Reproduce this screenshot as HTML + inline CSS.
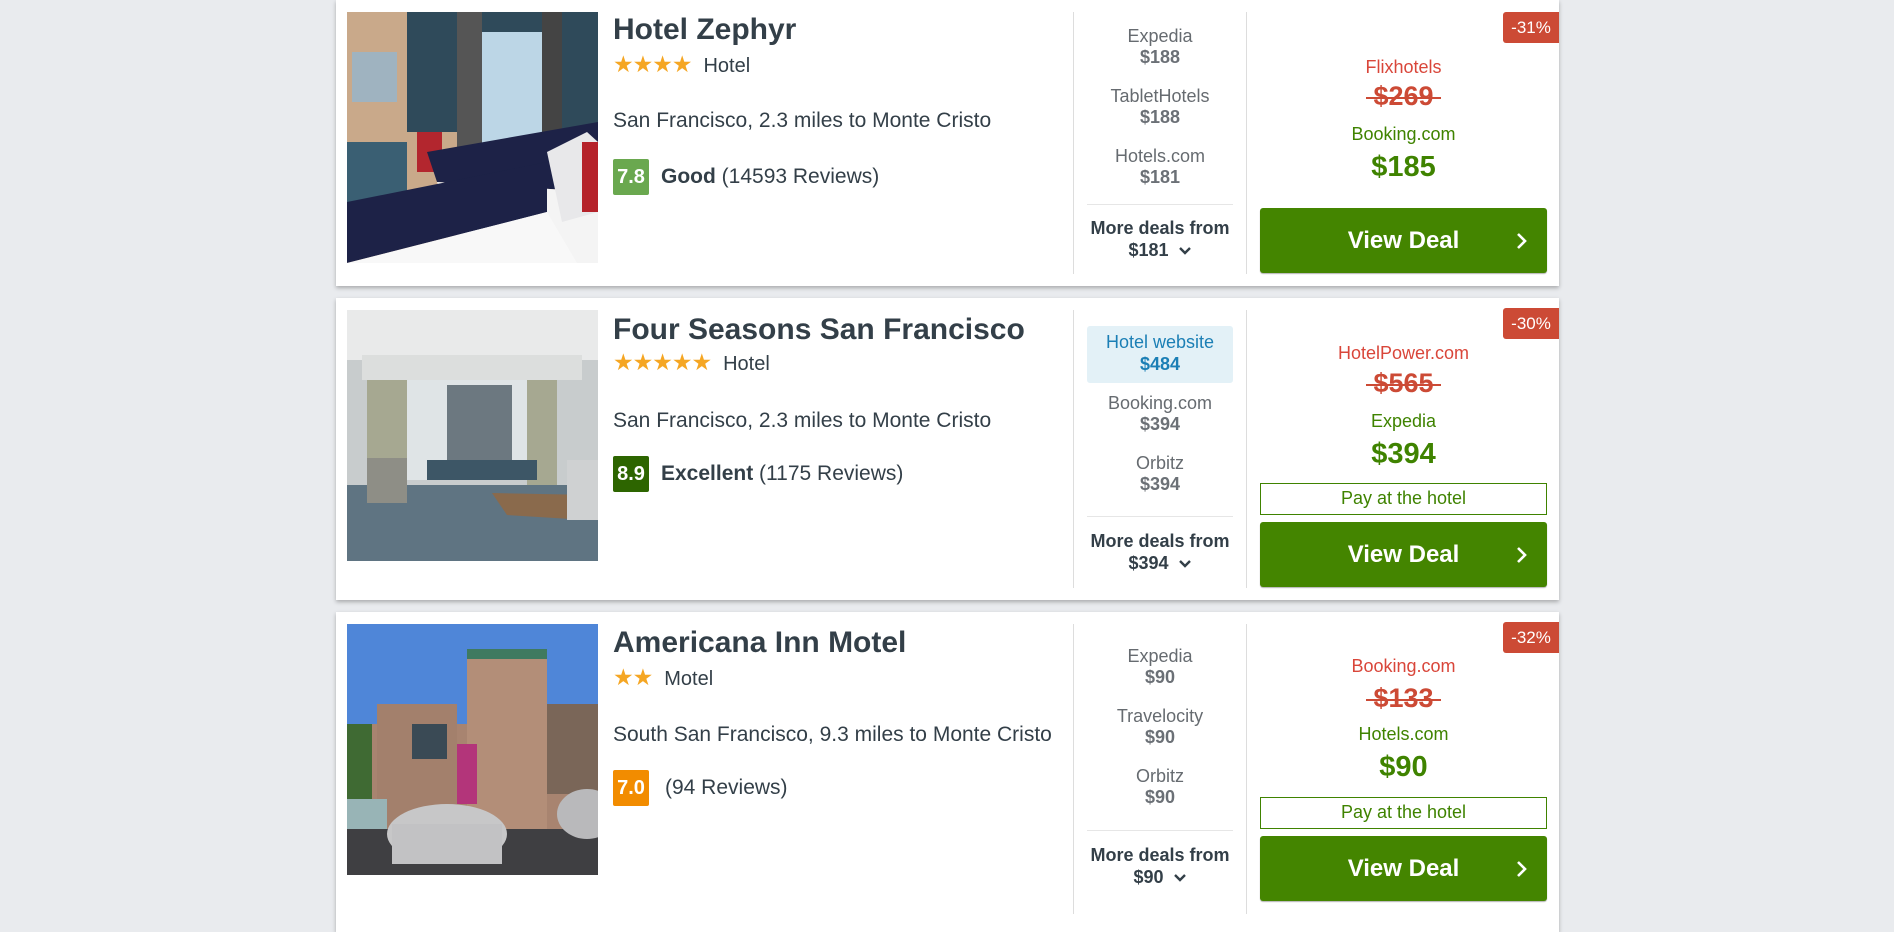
<!DOCTYPE html>
<html><head><meta charset="utf-8"><style>
*{margin:0;padding:0;box-sizing:border-box}
body{width:1894px;height:910px;overflow:hidden;background:#e9ebee;font-family:"Liberation Sans",Arial,sans-serif;position:relative}
.card{position:absolute;left:336px;width:1223px;background:#fff;box-shadow:0 2px 4px rgba(0,0,0,.28)}
.img{position:absolute;left:11px;top:12px;width:251px;height:251px;overflow:hidden}
.t{position:absolute;white-space:nowrap}
.title{left:277px;font-size:30px;font-weight:bold;color:#333f48;height:34px;line-height:34px}
.stars{left:277px;color:#f5a623;font-size:23px;height:26px;line-height:26px;letter-spacing:-1px}
.type{font-size:20px;color:#333f48;letter-spacing:0;margin-left:12px}
.loc{left:277px;font-size:21px;color:#333f48;height:26px;line-height:26px}
.rb{position:absolute;left:277px;width:36px;height:36px;border-radius:2px;color:#fff;font-weight:bold;font-size:20px;line-height:36px;text-align:center}
.rt{left:325px;font-size:21px;color:#333f48;height:36px;line-height:36px}
.v1{position:absolute;left:737px;top:12px;width:1px;background:#ddd}
.v2{position:absolute;left:910px;top:12px;width:1px;background:#ddd}
.mid{position:absolute;left:751px;width:146px;text-align:center;font-size:18px;height:22px;line-height:22px;color:#666b70}
.mid.p{font-weight:bold;color:#6b7076;font-size:18px}
.hl{position:absolute;left:751px;width:146px;background:#e3f1f7;border-radius:3px}
.sep{position:absolute;left:751px;width:146px;height:1px;background:#e6e6e6}
.more{position:absolute;left:736px;width:176px;text-align:center;font-size:18px;font-weight:bold;color:#333f48;height:22px;line-height:22px}
.rc{position:absolute;left:924px;width:287px;text-align:center;white-space:nowrap}
.prov{font-size:18px;height:22px;line-height:22px}
.old{font-size:27px;font-weight:bold;color:#cc4a35;height:30px;line-height:30px}
.old span{position:relative;display:inline-block}
.old span:after{content:"";position:absolute;left:-7px;right:-7px;top:53%;height:2px;background:#cc4a35}
.new{font-size:29px;font-weight:bold;color:#3f8300;height:34px;line-height:34px}
.badge{position:absolute;right:0;top:12px;width:56px;height:31px;background:#cc4a35;color:#fff;font-size:17px;line-height:31px;text-align:center;border-radius:3px 0 0 3px}
.pay{position:absolute;left:924px;width:287px;height:32px;border:1.5px solid #3f8300;color:#3f8300;font-size:18px;line-height:29px;text-align:center}
.btn{position:absolute;left:924px;width:287px;height:65px;background:#448500;border-radius:3px;color:#fff;font-weight:bold;font-size:24px;line-height:65px;text-align:center;box-shadow:0 1px 1px rgba(0,0,0,.3)}
.btn svg{position:absolute;right:19px;top:24px}
.chev{display:inline-block;vertical-align:middle;margin-left:4px}
</style></head><body>

<!-- CARD 1 -->
<div class="card" style="top:0;height:286px">
 <div class="img"><svg width="251" height="251" viewBox="0 0 251 251">
  <rect width="251" height="251" fill="#c9a98a"/>
  <rect x="60" y="0" width="191" height="120" fill="#2f4a5a"/>
  <rect x="130" y="20" width="70" height="140" fill="#bcd6e6"/>
  <rect x="110" y="0" width="25" height="180" fill="#555"/>
  <rect x="195" y="0" width="20" height="170" fill="#444"/>
  <rect x="0" y="130" width="60" height="80" fill="#3a5f73"/>
  <rect x="5" y="40" width="45" height="50" fill="#9fb3c0"/>
  <rect x="70" y="120" width="25" height="40" fill="#b3262e"/>
  <polygon points="80,140 251,110 251,180 90,170" fill="#1d2247"/>
  <polygon points="90,170 251,180 251,251 120,251" fill="#f4f4f4"/>
  <polygon points="0,190 200,150 200,200 0,251" fill="#1d2247"/>
  <polygon points="0,251 200,200 230,251" fill="#f8f8f8"/>
  <polygon points="200,140 240,120 251,130 251,200 215,210" fill="#e8e8ea"/>
  <rect x="235" y="130" width="16" height="70" fill="#b5222a"/>
 </svg></div>
 <div class="t title" style="top:13px">Hotel Zephyr</div>
 <div class="t stars" style="top:51px">★★★★<span class="type">Hotel</span></div>
 <div class="t loc" style="top:108px">San Francisco, 2.3 miles to Monte Cristo</div>
 <div class="rb" style="top:159px;background:#6aa84f">7.8</div>
 <div class="t rt" style="top:159px"><b>Good</b> (14593 Reviews)</div>
 <div class="v1" style="height:262px"></div><div class="v2" style="height:262px"></div>
 <div class="mid" style="top:25px">Expedia</div><div class="mid p" style="top:46px">$188</div>
 <div class="mid" style="top:85px">TabletHotels</div><div class="mid p" style="top:106px">$188</div>
 <div class="mid" style="top:145px">Hotels.com</div><div class="mid p" style="top:166px">$181</div>
 <div class="sep" style="top:204px"></div>
 <div class="more" style="top:217px">More deals from</div>
 <div class="more" style="top:239px">$181 <svg class="chev" width="14" height="10" viewBox="0 0 14 10"><path d="M2 2 L7 7 L12 2" stroke="#333f48" stroke-width="2.4" fill="none"/></svg></div>
 <div class="badge">-31%</div>
 <div class="rc prov" style="top:56px;color:#d9463a">Flixhotels</div>
 <div class="rc old" style="top:81px"><span>$269</span></div>
 <div class="rc prov" style="top:123px;color:#3f8300">Booking.com</div>
 <div class="rc new" style="top:150px">$185</div>
 <div class="btn" style="top:208px">View Deal<svg width="12" height="18" viewBox="0 0 12 18"><path d="M2 2 L9 9 L2 16" stroke="#fff" stroke-width="2.6" fill="none"/></svg></div>
</div>

<!-- CARD 2 -->
<div class="card" style="top:298px;height:302px">
 <div class="img"><svg width="251" height="251" viewBox="0 0 251 251">
  <rect width="251" height="251" fill="#c8cccd"/>
  <rect width="251" height="50" fill="#e9eaea"/>
  <rect x="15" y="45" width="220" height="25" fill="#dcdedd"/>
  <rect x="55" y="70" width="130" height="100" fill="#dfe4e6"/>
  <rect x="100" y="75" width="65" height="80" fill="#6c7880"/>
  <rect x="20" y="70" width="40" height="110" fill="#a6a891"/>
  <rect x="180" y="70" width="30" height="110" fill="#a6a891"/>
  <rect x="80" y="150" width="110" height="20" fill="#3d5666"/>
  <rect x="0" y="175" width="251" height="76" fill="#5f7482"/>
  <polygon points="145,183 245,185 240,210 160,205" fill="#8a6a4c"/>
  <rect x="20" y="148" width="40" height="45" fill="#8e8e86"/>
  <rect x="220" y="150" width="31" height="60" fill="#cfd1d2"/>
 </svg></div>
 <div class="t title" style="top:15px">Four Seasons San Francisco</div>
 <div class="t stars" style="top:51px">★★★★★<span class="type">Hotel</span></div>
 <div class="t loc" style="top:110px">San Francisco, 2.3 miles to Monte Cristo</div>
 <div class="rb" style="top:158px;background:#2d6500">8.9</div>
 <div class="t rt" style="top:158px"><b>Excellent</b> (1175 Reviews)</div>
 <div class="v1" style="height:278px"></div><div class="v2" style="height:278px"></div>
 <div class="hl" style="top:28px;height:57px"></div>
 <div class="mid" style="top:33px;color:#1b7fb5">Hotel website</div><div class="mid p" style="top:55px;color:#1b7fb5">$484</div>
 <div class="mid" style="top:94px">Booking.com</div><div class="mid p" style="top:115px">$394</div>
 <div class="mid" style="top:154px">Orbitz</div><div class="mid p" style="top:175px">$394</div>
 <div class="sep" style="top:218px"></div>
 <div class="more" style="top:232px">More deals from</div>
 <div class="more" style="top:254px">$394 <svg class="chev" width="14" height="10" viewBox="0 0 14 10"><path d="M2 2 L7 7 L12 2" stroke="#333f48" stroke-width="2.4" fill="none"/></svg></div>
 <div class="badge" style="top:10px">-30%</div>
 <div class="rc prov" style="top:44px;color:#d9463a">HotelPower.com</div>
 <div class="rc old" style="top:70px"><span>$565</span></div>
 <div class="rc prov" style="top:112px;color:#3f8300">Expedia</div>
 <div class="rc new" style="top:139px">$394</div>
 <div class="pay" style="top:185px">Pay at the hotel</div>
 <div class="btn" style="top:224px">View Deal<svg width="12" height="18" viewBox="0 0 12 18"><path d="M2 2 L9 9 L2 16" stroke="#fff" stroke-width="2.6" fill="none"/></svg></div>
</div>

<!-- CARD 3 -->
<div class="card" style="top:612px;height:320px">
 <div class="img"><svg width="251" height="251" viewBox="0 0 251 251">
  <rect width="251" height="251" fill="#4f86d8"/>
  <rect x="0" y="100" width="251" height="151" fill="#a88470"/>
  <rect x="30" y="80" width="80" height="150" fill="#a3806c"/>
  <rect x="120" y="25" width="80" height="200" fill="#b38e78"/>
  <rect x="120" y="25" width="80" height="10" fill="#3f7a60"/>
  <rect x="200" y="80" width="51" height="90" fill="#7a6658"/>
  <rect x="0" y="100" width="25" height="110" fill="#3f6a33"/>
  <rect x="65" y="100" width="35" height="35" fill="#3a4a55"/>
  <rect x="0" y="175" width="40" height="60" fill="#98b4b6"/>
  <rect x="0" y="205" width="251" height="46" fill="#3f3f42"/>
  <ellipse cx="100" cy="210" rx="60" ry="30" fill="#c7c7c8"/>
  <rect x="45" y="200" width="110" height="40" fill="#c2c2c4"/>
  <ellipse cx="240" cy="190" rx="30" ry="25" fill="#b9b9bb"/>
  <rect x="110" y="120" width="20" height="60" fill="#b3357a"/>
 </svg></div>
 <div class="t title" style="top:14px">Americana Inn Motel</div>
 <div class="t stars" style="top:52px">★★<span class="type">Motel</span></div>
 <div class="t loc" style="top:110px">South San Francisco, 9.3 miles to Monte Cristo</div>
 <div class="rb" style="top:158px;background:#f28c00">7.0</div>
 <div class="t rt" style="top:158px;left:329px">(94 Reviews)</div>
 <div class="v1" style="height:290px"></div><div class="v2" style="height:290px"></div>
 <div class="mid" style="top:33px">Expedia</div><div class="mid p" style="top:54px">$90</div>
 <div class="mid" style="top:93px">Travelocity</div><div class="mid p" style="top:114px">$90</div>
 <div class="mid" style="top:153px">Orbitz</div><div class="mid p" style="top:174px">$90</div>
 <div class="sep" style="top:218px"></div>
 <div class="more" style="top:232px">More deals from</div>
 <div class="more" style="top:254px">$90 <svg class="chev" width="14" height="10" viewBox="0 0 14 10"><path d="M2 2 L7 7 L12 2" stroke="#333f48" stroke-width="2.4" fill="none"/></svg></div>
 <div class="badge" style="top:10px">-32%</div>
 <div class="rc prov" style="top:43px;color:#d9463a">Booking.com</div>
 <div class="rc old" style="top:71px"><span>$133</span></div>
 <div class="rc prov" style="top:111px;color:#3f8300">Hotels.com</div>
 <div class="rc new" style="top:138px">$90</div>
 <div class="pay" style="top:185px">Pay at the hotel</div>
 <div class="btn" style="top:224px">View Deal<svg width="12" height="18" viewBox="0 0 12 18"><path d="M2 2 L9 9 L2 16" stroke="#fff" stroke-width="2.6" fill="none"/></svg></div>
</div>
</body></html>
